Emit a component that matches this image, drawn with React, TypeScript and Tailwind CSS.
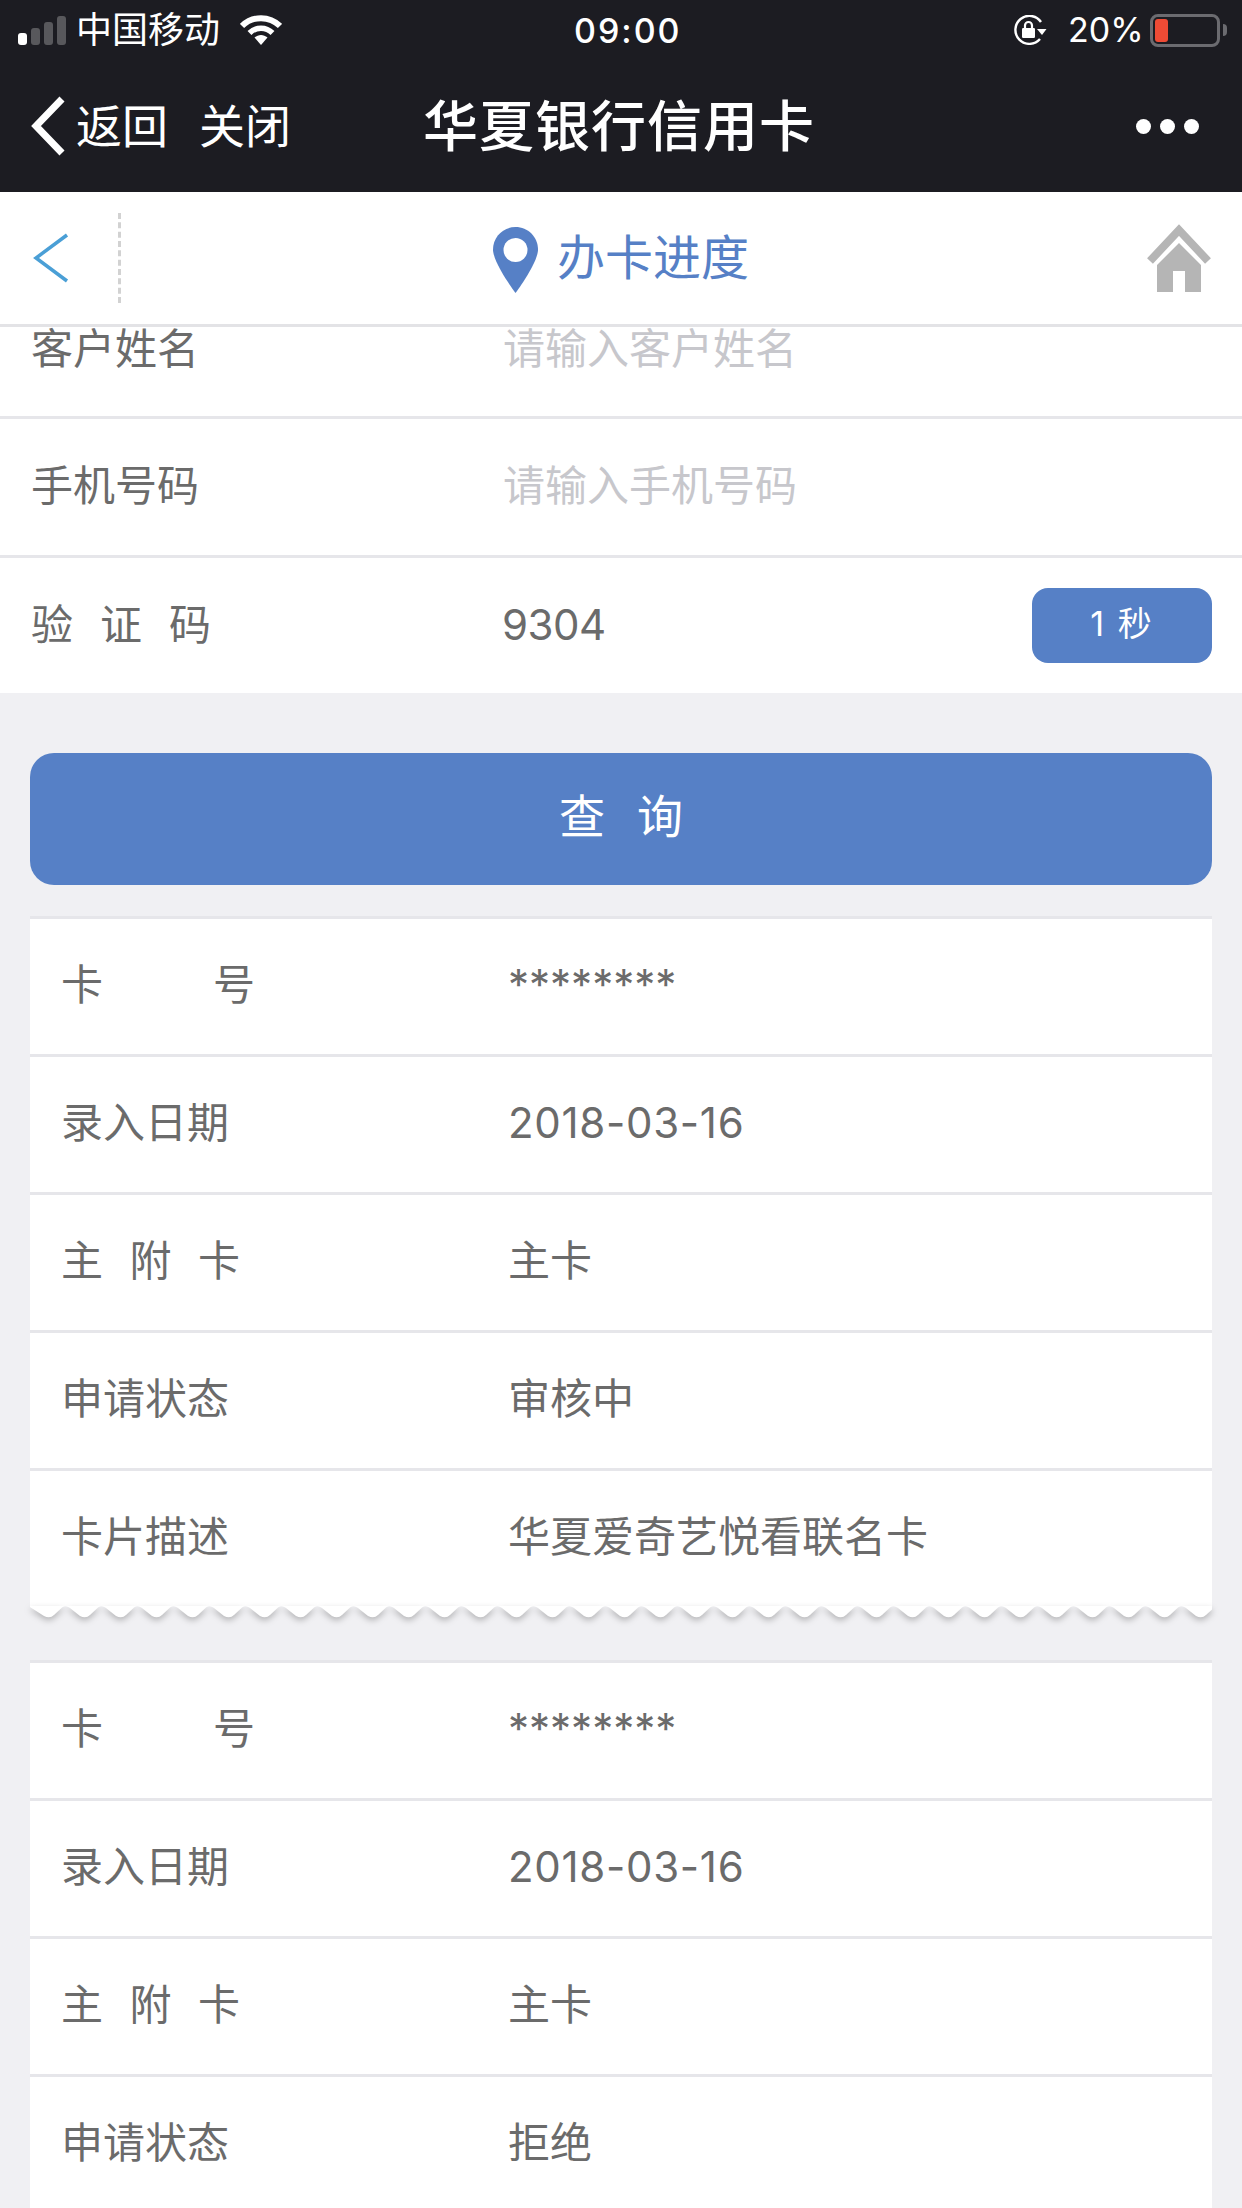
import React from 'react';

interface RowData {
  label: string;
  value: string;
  spread?: string;
}

const firstCard: RowData[] = [
  { label: '卡号', value: '********', spread: 'w-[194px]' },
  { label: '录入日期', value: '2018-03-16' },
  { label: '主附卡', value: '主卡', spread: 'w-[179px]' },
  { label: '申请状态', value: '审核中' },
  { label: '卡片描述', value: '华夏爱奇艺悦看联名卡' },
];

const secondCard: RowData[] = [
  { label: '卡号', value: '********', spread: 'w-[194px]' },
  { label: '录入日期', value: '2018-03-16' },
  { label: '主附卡', value: '主卡', spread: 'w-[179px]' },
  { label: '申请状态', value: '拒绝' },
];

const wavePath = () => {
  let d = 'M0 -4 L0 1';
  for (let x = 0; x < 1182; x += 36) {
    d += ` L${x + 14} 10 Q${x + 20} 13 ${x + 24} 9 L${x + 32} 1.5 Q${x + 36} -1 ${x + 40} 2`;
  }
  return d + ' L1182 -4 Z';
};

const SpreadLabel = ({ text, width }: { text: string; width?: string }) => {
  if (!width) return <span>{text}</span>;
  return (
    <span className={`flex justify-between ${width}`}>
      {text.split('').map((c, i) => (
        <span key={i}>{c}</span>
      ))}
    </span>
  );
};

const CardRow = ({ label, value, spread }: RowData) => (
  <div className="h-[138px] pb-[5px] border-t-[3px] border-[#e6e6ea] flex items-center pl-[31px] text-[42px] text-[#6b6b6b]">
    <div className="w-[447px] shrink-0">
      <SpreadLabel text={label} width={spread} />
    </div>
    <div className={value.includes('-') ? 'tracking-[0.7px]' : ''}>{value}</div>
  </div>
);

const FormRow = ({ children, className }: { children: React.ReactNode; className: string }) => (
  <div className={`flex items-center pl-[31px] pr-[30px] text-[42px] text-[#6b6b6b] bg-white ${className}`}>
    {children}
  </div>
);

const StatusBar = () => (
  <div className="h-[60px] flex items-center text-white text-[36px] leading-none">
    <div className="flex items-end gap-[4px] ml-[18px] h-[29px]">
      <div className="w-[9px] h-[12px] rounded-[3px] bg-white" />
      <div className="w-[9px] h-[17px] rounded-[3px] bg-[#58585c]" />
      <div className="w-[9px] h-[23px] rounded-[3px] bg-[#58585c]" />
      <div className="w-[9px] h-[29px] rounded-[3px] bg-[#58585c]" />
    </div>
    <span className="ml-[10px] w-[144px] whitespace-nowrap">中国移动</span>
    <svg className="ml-[20px]" width="42" height="30" viewBox="0 0 42 30" fill="none" stroke="white">
      <path d="M2 11C12.5 0.5 29.5 0.5 40 11" strokeWidth="6" />
      <path d="M9.5 18C16 11.5 26 11.5 32.5 18" strokeWidth="5.5" />
      <path d="M14.5 22.5L21 30L27.5 22.5C23.5 19 18.5 19 14.5 22.5Z" fill="white" stroke="none" />
    </svg>
    <span className="ml-[292px] mt-[2px] w-[106px] text-[34px] font-medium tracking-[2px] whitespace-nowrap">09:00</span>
    <svg className="ml-[333px]" width="34" height="30" viewBox="0 0 34 30" fill="none">
      <path d="M27 24A14 14 0 1 1 28 7" stroke="white" strokeWidth="2.4" />
      <path d="M24 14H33.5L29 20Z" fill="white" />
      <rect x="9" y="13" width="13" height="10" rx="1.2" fill="white" />
      <path d="M12 13V10.5A3.5 3.5 0 0 1 19 10.5V13" stroke="white" strokeWidth="2.2" />
    </svg>
    <span className="ml-[21px] w-[71px] text-[34px] whitespace-nowrap">20%</span>
    <div className="ml-[11px] w-[70px] h-[33px] rounded-[8px] border-[3px] border-[#6b6b70] p-[2px] flex">
      <div className="w-[13px] h-full rounded-[3px] bg-[#ee4b35]" />
    </div>
    <div className="ml-[3px] w-[4px] h-[12px] rounded-r-full bg-[#6b6b70]" />
  </div>
);

const NavBar = () => (
  <div className="h-[132px] flex items-center text-white">
    <svg className="ml-[31px]" width="34" height="60" viewBox="0 0 34 60" fill="none">
      <path d="M31 3L5 30L31 57" stroke="white" strokeWidth="7" />
    </svg>
    <span className="ml-[11px] w-[91px] text-[46px] whitespace-nowrap">返回</span>
    <span className="ml-[32px] w-[224px] text-[46px] whitespace-nowrap">关闭</span>
    <span className="w-[390px] text-[55px] font-medium whitespace-nowrap tracking-[1px]">华夏银行信用卡</span>
    <div className="ml-[323px] flex gap-[9px]">
      <div className="w-[15px] h-[15px] rounded-full bg-white" />
      <div className="w-[15px] h-[15px] rounded-full bg-white" />
      <div className="w-[15px] h-[15px] rounded-full bg-white" />
    </div>
  </div>
);

const SubHeader = () => (
  <div className="relative z-10 h-[135px] bg-white border-b-[3px] border-[#e3e3e6] flex items-center">
    <svg className="ml-[33px]" width="36" height="50" viewBox="0 0 36 50" fill="none">
      <path d="M34 2L3 25L34 48" stroke="#4a9fd6" strokeWidth="3.5" />
    </svg>
    <div className="ml-[49px] h-[90px] border-l-[3px] border-dashed border-[#d2d2d2]" />
    <svg className="ml-[372px] mt-[3px]" width="45" height="66" viewBox="0 0 45 66">
      <path d="M22.5 0C10 0 0 10 0 22.5C0 36 22.5 66 22.5 66C22.5 66 45 36 45 22.5C45 10 35 0 22.5 0Z" fill="#5680c6" />
      <circle cx="22.5" cy="23" r="12" fill="white" />
    </svg>
    <span className="ml-[19px] text-[48px] text-[#5680c6] whitespace-nowrap">办卡进度</span>
    <svg className="ml-[398px]" width="64" height="68" viewBox="0 0 64 68">
      <path d="M3 37L32 6L61 37" fill="none" stroke="#b5b5b5" strokeWidth="8" />
      <path d="M32 19L54 41V68H38V47H26V68H10V41Z" fill="#b5b5b5" />
    </svg>
  </div>
);

export default function App() {
  return (
    <div className="w-[1242px] h-[2208px] overflow-hidden bg-[#f0f0f3] [font-family:Inter,'Noto_Sans_CJK_SC',sans-serif]">
      <div className="bg-[#1c1c22]">
        <StatusBar />
        <NavBar />
      </div>
      <SubHeader />

      {/* first row is scrolled partly under the header */}
      <FormRow className="h-[92px] pb-[47px] overflow-hidden border-b-[3px] border-[#e6e6ea]">
        <span className="w-[472px] shrink-0">客户姓名</span>
        <span className="text-[#c7c7cc]">请输入客户姓名</span>
      </FormRow>
      <FormRow className="h-[139px] pb-[3px] border-b-[3px] border-[#e6e6ea]">
        <span className="w-[472px] shrink-0">手机号码</span>
        <span className="text-[#c7c7cc]">请输入手机号码</span>
      </FormRow>
      <FormRow className="h-[135px]">
        <span className="w-[471px] shrink-0 pb-[3px]">
          <SpreadLabel text="验证码" width="w-[180px]" />
        </span>
        <span className="pb-[3px] tracking-[-0.5px]">9304</span>
        <button className="ml-auto w-[180px] h-[75px] pb-[4px] rounded-[16px] bg-[#5680c6] text-white text-[34px] tracking-[2px]">1 秒</button>
      </FormRow>

      <div className="px-[30px]">
        <button className="mt-[60px] w-full h-[132px] pb-[5px] rounded-[24px] bg-[#5680c6] text-white text-[46px] tracking-[32px] pl-[32px]">
          查询
        </button>

        <div className="mt-[31px] bg-white">
          {firstCard.map((r) => (
            <CardRow key={r.label} {...r} />
          ))}
        </div>
        <svg
          className="block drop-shadow-[0_3px_3px_rgba(0,0,0,0.25)]"
          width="1182"
          height="22"
          viewBox="0 0 1182 22"
        >
          <path d={wavePath()} fill="white" />
        </svg>

        <div className="mt-[32px] bg-white">
          {secondCard.map((r) => (
            <CardRow key={r.label} {...r} />
          ))}
        </div>
      </div>
    </div>
  );
}
